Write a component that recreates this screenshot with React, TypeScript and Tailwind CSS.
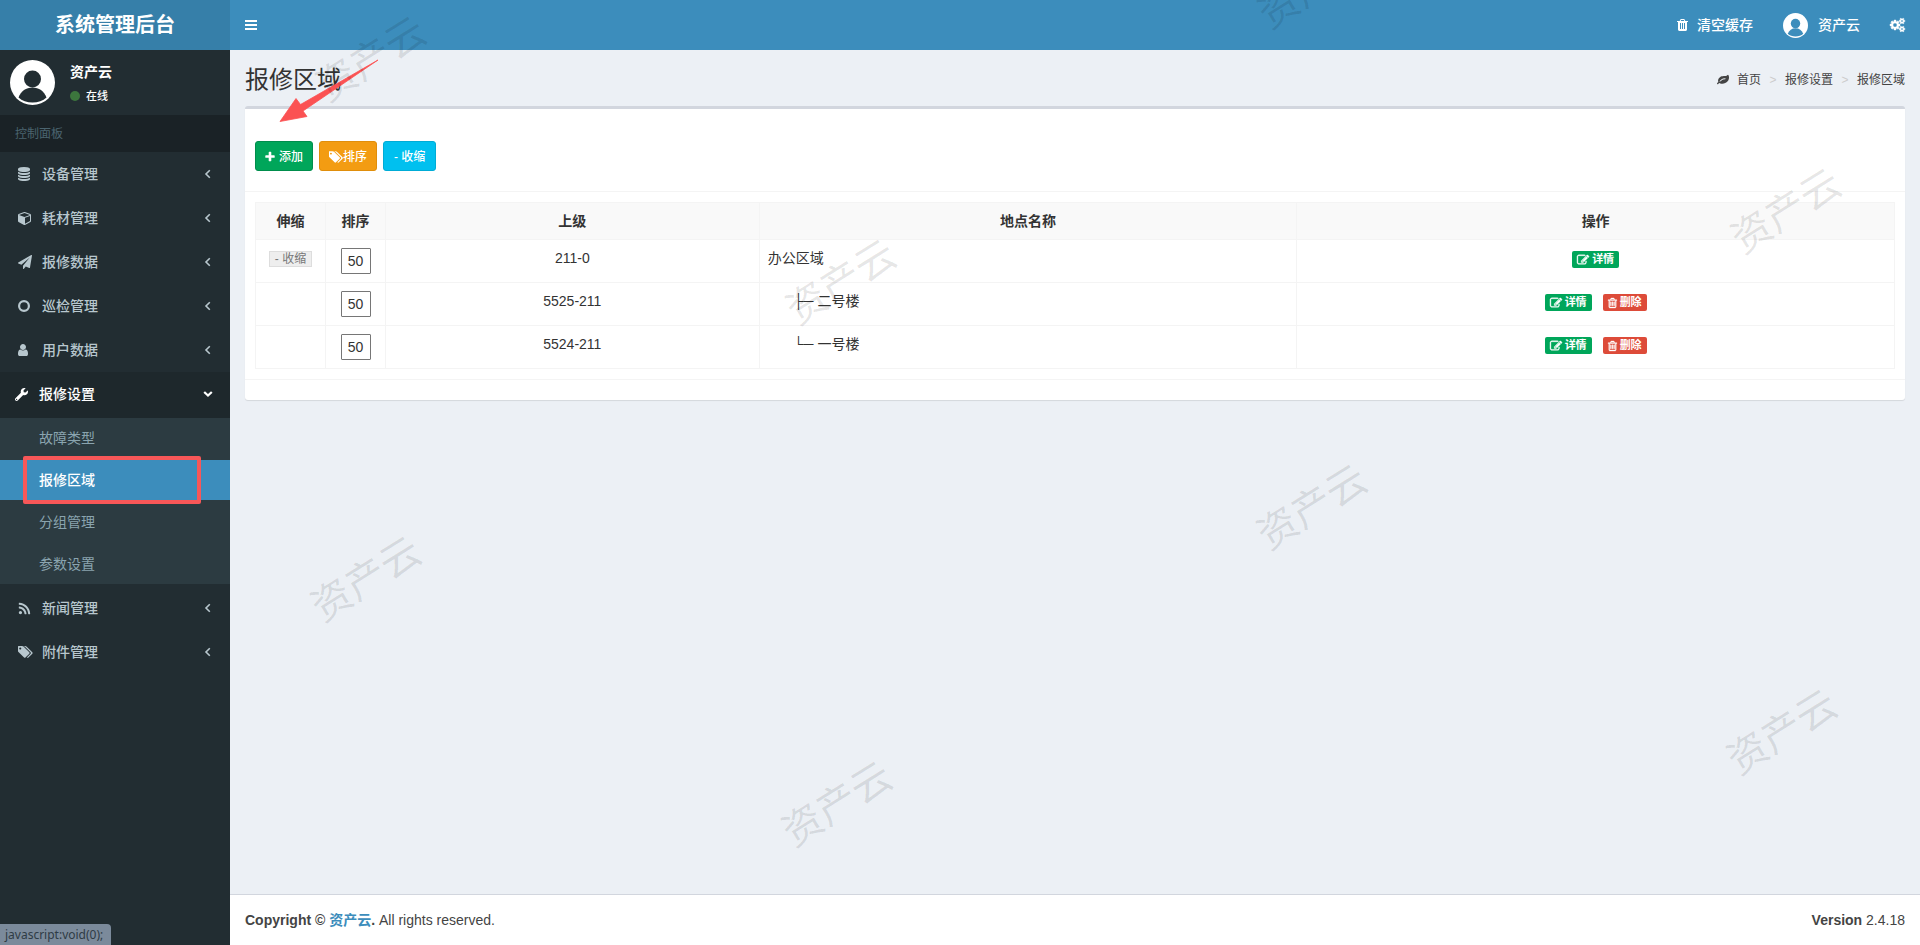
import { useState, type FC, type ReactNode } from "react";
import { FaRss, FaWrench } from "react-icons/fa";

type IconProps = { className?: string };

const makeIcon = (path: string, viewBox = "0 0 1792 1792"): FC<IconProps> => {
  const Icon: FC<IconProps> = ({ className }) => (
    <svg viewBox={viewBox} fill="currentColor" className={className} aria-hidden="true">
      <path d={path} />
    </svg>
  );
  return Icon;
};

const PlusIcon = makeIcon(
  "M1600 736v192q0 40-28 68t-68 28h-416v416q0 40-28 68t-68 28h-192q-40 0-68-28t-28-68v-416h-416q-40 0-68-28t-28-68v-192q0-40 28-68t68-28h416v-416q0-40 28-68t68-28h192q40 0 68 28t28 68v416h416q40 0 68 28t28 68z",
  "192 0 1408 1792"
);
const DatabaseIcon = makeIcon(
  "M896 768q237 0 443-43t325-127v170q0 69-103 128t-280 93.5-385 34.5-385-34.5-280-93.5-103-128v-170q119 84 325 127t443 43zm0 768q237 0 443-43t325-127v170q0 69-103 128t-280 93.5-385 34.5-385-34.5-280-93.5-103-128v-170q119 84 325 127t443 43zm0-384q237 0 443-43t325-127v170q0 69-103 128t-280 93.5-385 34.5-385-34.5-280-93.5-103-128v-170q119 84 325 127t443 43zm0-1152q208 0 385 34.5t280 93.5 103 128v128q0 69-103 128t-280 93.5-385 34.5-385-34.5-280-93.5-103-128v-128q0-69 103-128t280-93.5 385-34.5z",
  "128 0 1536 1792"
);
const CubeIcon = makeIcon(
  "M896 1629l640-349v-636l-640 233v752zm-64-865l698-254-698-254-698 254 698 254zm832-252v768q0 35-18 65t-49 47l-704 384q-28 16-61 16t-61-16l-704-384q-31-17-49-47t-18-65v-768q0-40 23-73t61-47l704-256q22-8 44-8t44 8l704 256q38 14 61 47t23 73z",
  "0 0 1664 1792"
);
const PlaneIcon = makeIcon(
  "M1764 11q33 24 27 64l-256 1536q-5 29-32 45-14 8-31 8-11 0-24-5l-453-185-242 295q-18 23-49 23-13 0-22-4-19-7-30.5-23.5t-11.5-36.5v-349l864-1059-1069 925-395-162q-37-14-40-55-2-40 32-59l1664-960q15-9 32-9 20 0 36 11z"
);
const LeafIcon = makeIcon(
  "M1280 704q0-26-19-45t-45-19q-172 0-318 49.5t-259.5 134-235.5 219.5q-19 21-19 45 0 26 19 45t45 19q24 0 45-19 27-24 74-71t67-66q137-124 268.5-176t313.5-52q26 0 45-19t19-45zm512-198q0 95-20 193-46 224-184.5 383t-357.5 268q-214 108-438 108-148 0-286-47-15-5-88-42t-96-37q-16 0-39.5 32t-45 70-52.5 70-60 32q-43 0-63.5-17.5t-45.5-59.5q-2-4-6-11t-5.5-10-3-9.5-1.5-13.5q0-35 31-73.5t68-65.5 68-56 31-48q0-4-14-38t-16-44q-9-51-9-104 0-115 43.5-220t119-184.5 170.5-139 204-95.5q55-18 145-25.5t179.5-9 178.5-6 163.5-24 113.5-56.5l29.5-29.5 29.5-28 27-20 36.5-16 43.5-4.5q39 0 70.5 46t47.5 112 24 124 8 96z"
);
const EditIcon = makeIcon(
  "M888 1184l116-116-152-152-116 116v56h96v96h56zm440-720q-16-16-33 1l-350 350q-17 17-1 33t33-1l350-350q17-17 1-33zm80 594v190q0 119-84.5 203.5t-203.5 84.5h-832q-119 0-203.5-84.5t-84.5-203.5v-832q0-119 84.5-203.5t203.5-84.5h832q63 0 117 25 15 7 18 23 3 17-9 29l-49 49q-14 14-32 8-23-6-45-6h-832q-66 0-113 47t-47 113v832q0 66 47 113t113 47h832q66 0 113-47t47-113v-126q0-13 9-22l64-64q15-15 35-7t20 29zm-96-738l288 288-672 672h-288v-288zm444 132l-92 92-288-288 92-92q28-28 68-28t68 28l152 152q28 28 28 68t-28 68z"
);
const TrashOutlineIcon = makeIcon(
  "M704 736v576q0 14-9 23t-23 9h-64q-14 0-23-9t-9-23v-576q0-14 9-23t23-9h64q14 0 23 9t9 23zm256 0v576q0 14-9 23t-23 9h-64q-14 0-23-9t-9-23v-576q0-14 9-23t23-9h64q14 0 23 9t9 23zm256 0v576q0 14-9 23t-23 9h-64q-14 0-23-9t-9-23v-576q0-14 9-23t23-9h64q14 0 23 9t9 23zm128 724v-948h-896v948q0 22 7 40.5t14.5 27 10.5 8.5h832q3 0 10.5-8.5t14.5-27 7-40.5zm-672-1076h448l-48-117q-7-9-17-11h-317q-10 2-17 11zm928 32v64q0 14-9 23t-23 9h-96v948q0 83-47 143.5t-113 60.5h-832q-66 0-113-58.5t-47-141.5v-952h-96q-14 0-23-9t-9-23v-64q0-14 9-23t23-9h309l70-167q15-37 54-63t79-26h320q40 0 79 26t54 63l70 167h309q14 0 23 9t9 23z",
  "192 128 1408 1536"
);
const TrashIcon = makeIcon(
  "M704 1376v-704q0-14-9-23t-23-9h-64q-14 0-23 9t-9 23v704q0 14 9 23t23 9h64q14 0 23-9t9-23zm256 0v-704q0-14-9-23t-23-9h-64q-14 0-23 9t-9 23v704q0 14 9 23t23 9h64q14 0 23-9t9-23zm256 0v-704q0-14-9-23t-23-9h-64q-14 0-23 9t-9 23v704q0 14 9 23t23 9h64q14 0 23-9t9-23zm-544-992h448l-48-117q-7-9-17-11h-317q-10 2-17 11zm928 32v64q0 14-9 23t-23 9h-96v948q0 83-47 143.5t-113 60.5h-832q-66 0-113-58.5t-47-141.5v-952h-96q-14 0-23-9t-9-23v-64q0-14 9-23t23-9h309l70-167q15-37 54-63t79-26h320q40 0 79 26t54 63l70 167h309q14 0 23 9t9 23z",
  "192 0 1408 1792"
);
const UserIcon = makeIcon(
  "M1536 1399q0 109-62.5 187t-150.5 78h-854q-88 0-150.5-78t-62.5-187q0-85 8.5-160.5t31.5-152 58.5-131 94-89 134.5-34.5q131 128 313 128t313-128q76 0 134.5 34.5t94 89 58.5 131 31.5 152 8.5 160.5zm-256-887q0 159-112.5 271.5t-271.5 112.5-271.5-112.5-112.5-271.5 112.5-271.5 271.5-112.5 271.5 112.5 112.5 271.5z",
  "256 128 1280 1536"
);
const TagsIcon = makeIcon(
  "M576 448q0-53-37.5-90.5t-90.5-37.5-90.5 37.5-37.5 90.5 37.5 90.5 90.5 37.5 90.5-37.5 37.5-90.5zm1067 576q0 53-37 90l-491 492q-39 37-91 37-53 0-90-37l-715-716q-38-37-64.5-101t-26.5-117v-416q0-52 38-90t90-38h416q53 0 117 26.5t102 64.5l715 714q37 39 37 91zm384 0q0 53-37 90l-491 492q-39 37-91 37-36 0-59-14t-53-45l470-470q37-37 37-90 0-52-37-91l-715-714q-38-38-102-64.5t-117-26.5h224q53 0 117 26.5t102 64.5l715 714q37 39 37 91z",
  "192 128 1856 1536"
);
const CogsIcon = makeIcon(
  "M896 896q0-106-75-181t-181-75-181 75-75 181 75 181 181 75 181-75 75-181zm768 512q0-52-38-90t-90-38-90 38-38 90q0 53 37.5 90.5t90.5 37.5 90.5-37.5 37.5-90.5zm0-1024q0-52-38-90t-90-38-90 38-38 90q0 53 37.5 90.5t90.5 37.5 90.5-37.5 37.5-90.5zm-384 421v185q0 10-7 19.5t-16 10.5l-155 24q-11 35-32 76 34 48 90 115 7 11 7 20 0 12-7 19-23 30-82.5 89.5t-78.5 59.5q-11 0-21-7l-115-90q-37 19-77 31-11 108-23 155-7 24-30 24h-186q-11 0-20-7.5t-10-17.5l-23-153q-34-10-75-31l-118 89q-7 7-20 7-11 0-21-8-144-133-144-160 0-9 7-19 10-14 41-53t47-61q-23-44-35-82l-152-24q-10-1-17-9.5t-7-19.5v-185q0-10 7-19.5t16-10.5l155-24q11-35 32-76-34-48-90-115-7-11-7-20 0-12 7-20 22-30 82-89t79-59q11 0 21 7l115 90q34-18 77-32 11-108 23-154 7-24 30-24h186q11 0 20 7.5t10 17.5l23 153q34 10 75 31l118-89q8-7 20-7 11 0 21 8 144 133 144 160 0 8-7 19-12 16-42 54t-45 60q23 48 34 82l152 23q10 2 17 10.5t7 19.5zm640 533v140q0 16-149 31-12 27-30 52 51 113 51 138 0 4-4 7-122 71-124 71-8 0-46-47t-52-68q-20 2-30 2t-30-2q-14 21-52 68t-46 47q-2 0-124-71-4-3-4-7 0-25 51-138-18-25-30-52-149-15-149-31v-140q0-16 149-31 13-29 30-52-51-113-51-138 0-4 4-7 4-2 35-20t59-34 30-16q8 0 46 46.5t52 67.5q20-2 30-2t30 2q51-71 92-112l6-2q4 0 124 70 4 3 4 7 0 25-51 138 17 23 30 52 149 15 149 31zm0-1024v140q0 16-149 31-12 27-30 52 51 113 51 138 0 4-4 7-122 71-124 71-8 0-46-47t-52-68q-20 2-30 2t-30-2q-14 21-52 68t-46 47q-2 0-124-71-4-3-4-7 0-25 51-138-18-25-30-52-149-15-149-31v-140q0-16 149-31 13-29 30-52-51-113-51-138 0-4 4-7 4-2 35-20t59-34 30-16q8 0 46 46.5t52 67.5q20-2 30-2t30 2q51-71 92-112l6-2q4 0 124 70 4 3 4 7 0 25-51 138 17 23 30 52 149 15 149 31z",
  "0 0 1920 1792"
);
const BarsIcon = makeIcon("M0 0h12v2H0zM0 4h12v2H0zM0 8h12v2H0z", "0 0 12 10");

const AngleIcon: FC<{ open?: boolean }> = ({ open }) => (
  <svg viewBox="0 0 10 10" fill="none" stroke="currentColor" className="size-2.5" aria-hidden="true">
    {open ? (
      <path d="M1.2 3L5 6.6 8.8 3" strokeWidth="2.2" />
    ) : (
      <path d="M6.8 1.2L3 5 6.8 8.8" strokeWidth="1.6" />
    )}
  </svg>
);

const CircleIcon: FC<IconProps> = ({ className }) => (
  <svg viewBox="0 0 12 12" fill="none" stroke="currentColor" strokeWidth="2.2" className={className} aria-hidden="true">
    <circle cx="6" cy="6" r="4.9" />
  </svg>
);

const Avatar: FC<IconProps & { ink: string }> = ({ className, ink }) => (
  <svg viewBox="0 0 45 45" className={className} aria-hidden="true">
    <circle cx="22.5" cy="22.5" r="22.5" fill="#fff" />
    <circle cx="22.5" cy="19" r="8.5" fill={ink} />
    <path d="M8.5 37.5C11 31 16 27.5 22.5 27.5S34 31 36.5 37.5C33 40.8 28 42.5 22.5 42.5S12 40.8 8.5 37.5z" fill={ink} />
  </svg>
);

interface MenuItem {
  label: string;
  icon: ReactNode;
  children?: string[];
}

const MENU: MenuItem[] = [
  { label: "设备管理", icon: <DatabaseIcon className="h-3.5 w-3" /> },
  { label: "耗材管理", icon: <CubeIcon className="h-3.5 w-[13px]" /> },
  { label: "报修数据", icon: <PlaneIcon className="size-3.5" /> },
  { label: "巡检管理", icon: <CircleIcon className="size-3" /> },
  { label: "用户数据", icon: <UserIcon className="h-3 w-2.5" /> },
  {
    label: "报修设置",
    icon: <FaWrench className="size-[13px]" />,
    children: ["故障类型", "报修区域", "分组管理", "参数设置"],
  },
  { label: "新闻管理", icon: <FaRss className="size-[13px]" /> },
  { label: "附件管理", icon: <TagsIcon className="h-3 w-[15px]" /> },
];

const ROWS = [
  { parent: "211-0", prefix: "", name: "办公区域", root: true },
  { parent: "5525-211", prefix: "├─", name: "二号楼", root: false },
  { parent: "5524-211", prefix: "└─", name: "一号楼", root: false },
];

const Sidebar: FC = () => {
  const [current, setCurrent] = useState("报修区域");

  return (
    <aside className="w-[230px] shrink-0 bg-[#222d32] text-[#b8c7ce]">
      <div className="flex h-[65px] items-center pl-2.5">
        <Avatar className="size-[45px]" ink="#222d32" />
        <div className="pt-0.5 pl-[15px] text-white">
          <p className="text-sm leading-5 font-bold">资产云</p>
          <a href="#" className="mt-1 flex items-center gap-1.5 text-[11px] leading-5 font-medium">
            <span className="size-2.5 rounded-full bg-[#3c763d]" />
            在线
          </a>
        </div>
      </div>
      <div className="flex h-[37px] items-center bg-[#1a2226] pl-[15px] text-xs text-[#4b646f]">控制面板</div>
      <nav>
        <ul>
          {MENU.map((item) => (
            <li key={item.label} className={item.children ? "mb-0.5" : ""}>
              <a
                href="#"
                className={
                  item.children
                    ? "flex h-[46px] items-center bg-[#1e282c] pr-[17px] pb-0.5 pl-[15px] font-medium text-white"
                    : "flex h-11 items-center pr-[17px] pl-[18px] font-medium"
                }
              >
                <span className="flex w-6 items-center">{item.icon}</span>
                <span className="flex-1">{item.label}</span>
                <AngleIcon open={!!item.children} />
              </a>
              {item.children && (
                <ul className="flex flex-col gap-0.5 bg-[#2c3b41]">
                  {item.children.map((child) => (
                    <li key={child}>
                      <a
                        href="#"
                        onClick={() => setCurrent(child)}
                        className={
                          child === current
                            ? "relative flex h-10 items-center bg-[#3c8dbc] pl-[39px] font-medium text-white"
                            : "flex h-10 items-center pl-[39px] text-[#8aa4af]"
                        }
                      >
                        {child}
                        {child === current && (
                          <span className="absolute -inset-y-1 left-[23px] w-[178px] rounded-xs border-4 border-[#f85758]" />
                        )}
                      </a>
                    </li>
                  ))}
                </ul>
              )}
            </li>
          ))}
        </ul>
      </nav>
    </aside>
  );
};

const AreaTable: FC = () => (
  <table className="w-full table-fixed border-collapse border border-[#f4f4f4]">
    <colgroup>
      <col className="w-[70px]" />
      <col className="w-[60px]" />
      <col className="w-[22.8%]" />
      <col className="w-[32.8%]" />
      <col />
    </colgroup>
    <thead>
      <tr className="h-[37px] bg-[#f9f9f9]">
        {["伸缩", "排序", "上级", "地点名称", "操作"].map((title) => (
          <th key={title} className="border border-[#f4f4f4] p-2 leading-5 font-bold">
            {title}
          </th>
        ))}
      </tr>
    </thead>
    <tbody>
      {ROWS.map((row) => (
        <tr key={row.parent} className="h-[43px] text-center align-top leading-5">
          <td className="border border-[#f4f4f4] pt-[11px]">
            {row.root && (
              <button className="mx-auto block h-4 border border-[#ddd] bg-[#eee] px-[5px] text-xs leading-[14px] text-[#777]">
                - 收缩
              </button>
            )}
          </td>
          <td className="border border-[#f4f4f4] pt-2">
            <input
              type="text"
              defaultValue="50"
              aria-label={`${row.name} 排序`}
              className="mx-auto block h-[26px] w-[30px] rounded-[1px] border border-[#767676] bg-white text-center"
            />
          </td>
          <td className="border border-[#f4f4f4] py-2">{row.parent}</td>
          <td className="border border-[#f4f4f4] p-2 text-left">
            {row.prefix && <span className="pr-1 pl-[26px] whitespace-pre">{row.prefix}</span>}
            {row.name}
          </td>
          <td className="border border-[#f4f4f4] pt-[11px]">
            <div className="flex justify-center gap-[11px] text-[11px] leading-[17px] font-bold text-white">
              <button className="flex h-[17px] items-center gap-[3px] rounded-xs bg-[#00a65a] px-[5px]">
                <EditIcon className="size-3 overflow-visible stroke-current stroke-[60px]" />
                详情
              </button>
              {!row.root && (
                <button className="flex h-[17px] items-center gap-[3px] rounded-xs bg-[#dd4b39] px-[5px]">
                  <TrashOutlineIcon className="h-2.5 w-[9px] overflow-visible stroke-current stroke-[60px]" />
                  删除
                </button>
              )}
            </div>
          </td>
        </tr>
      ))}
    </tbody>
  </table>
);

const WATERMARKS = [
  { x: 371, y: 59 },
  { x: 1313, y: -14 },
  { x: 1786, y: 211 },
  { x: 841, y: 282 },
  { x: 1312, y: 507 },
  { x: 366, y: 579 },
  { x: 837, y: 804 },
  { x: 1782, y: 732 },
];

const App: FC = () => (
  <div className="relative flex min-h-screen flex-col overflow-hidden bg-[#ecf0f5] font-['Liberation_Sans','Noto_Sans_CJK_SC',sans-serif] text-sm text-[#333]">
    <header className="flex h-[50px] bg-[#3c8dbc] font-medium text-white">
      <a href="#" className="flex w-[230px] items-center justify-center bg-[#367fa9] text-xl font-bold">
        系统管理后台
      </a>
      <div className="flex flex-1 items-center px-[15px]">
        <button aria-label="切换菜单">
          <BarsIcon className="h-2.5 w-3" />
        </button>
        <a href="#" className="ml-auto flex items-center gap-[9px]">
          <TrashIcon className="h-3.5 w-[11px]" />
          清空缓存
        </a>
        <a href="#" className="ml-[30px] flex items-center gap-2.5">
          <Avatar className="size-[25px]" ink="#3c8dbc" />
          资产云
        </a>
        <a href="#" aria-label="设置" className="ml-[30px]">
          <CogsIcon className="h-3.5 w-[15px] overflow-visible stroke-current stroke-[60px]" />
        </a>
      </div>
    </header>

    <div className="flex flex-1">
      <Sidebar />
      <div className="flex min-w-0 flex-1 flex-col">
        <main className="flex-1 px-[15px]">
          <div className="flex h-14 items-center justify-between pt-1">
            <h1 className="text-2xl">报修区域</h1>
            <nav className="flex items-center text-xs text-[#444]">
              <LeafIcon className="mr-2 size-3" />
              <a href="#">首页</a>
              <span className="w-6 text-center text-[#ccc]">&gt;</span>
              <a href="#">报修设置</a>
              <span className="w-6 text-center text-[#ccc]">&gt;</span>
              <span>报修区域</span>
            </nav>
          </div>
          <section className="rounded-[3px] border-t-[3px] border-[#d2d6de] bg-white shadow-[0_1px_1px_rgba(0,0,0,0.1)]">
            <div className="flex gap-1.5 border-b border-[#f4f4f4] px-2.5 pt-8 pb-5 text-xs font-medium text-white">
              <button className="flex h-[30px] items-center gap-1 rounded-[3px] border border-[#008d4c] bg-[#00a65a] px-[9px] pt-0.5">
                <PlusIcon className="h-3 w-2.5" />
                添加
              </button>
              <button className="flex h-[30px] items-center rounded-[3px] border border-[#e08e0b] bg-[#f39c12] px-[9px] pt-0.5">
                <TagsIcon className="h-3 w-3.5" />
                排序
              </button>
              <button className="flex h-[30px] items-center rounded-[3px] border border-[#00acd6] bg-[#00c0ef] px-2.5 pt-0.5">
                - 收缩
              </button>
            </div>
            <div className="p-2.5">
              <AreaTable />
            </div>
            <div className="h-[21px] border-t border-[#f4f4f4]" />
          </section>
        </main>
        <footer className="flex h-[51px] items-center justify-between border-t border-[#d2d6de] bg-white px-[15px] text-[#444]">
          <p>
            <strong>
              Copyright © <a href="#" className="text-[#3c8dbc]">资产云</a>.
            </strong>{" "}
            All rights reserved.
          </p>
          <p>
            <b>Version</b> 2.4.18
          </p>
        </footer>
      </div>
    </div>

    <svg className="pointer-events-none absolute top-14 left-[276px] h-[68px] w-[106px]" viewBox="276 56 106 68" aria-hidden="true">
      <path d="M378 60L303 111 307 116.5 280 121.5 296 98.5 300.5 104.5z" fill="#fb5253" stroke="#fb5253" strokeWidth="0.8" />
    </svg>

    {WATERMARKS.map(({ x, y }) => (
      <span
        key={`${x}-${y}`}
        style={{ left: x, top: y }}
        className="pointer-events-none absolute -translate-x-1/2 -translate-y-1/2 -rotate-32 text-[40px] leading-none whitespace-nowrap text-black/10"
      >
        资产云
      </span>
    ))}

    <div className="absolute bottom-0 left-0 rounded-tr-sm bg-[#7b8a9b] pr-2 pl-[5px] font-['Noto_Sans',sans-serif] text-xs leading-[21px] text-[#2f3b45]">
      javascript:void(0);
    </div>
  </div>
);

export default App;
